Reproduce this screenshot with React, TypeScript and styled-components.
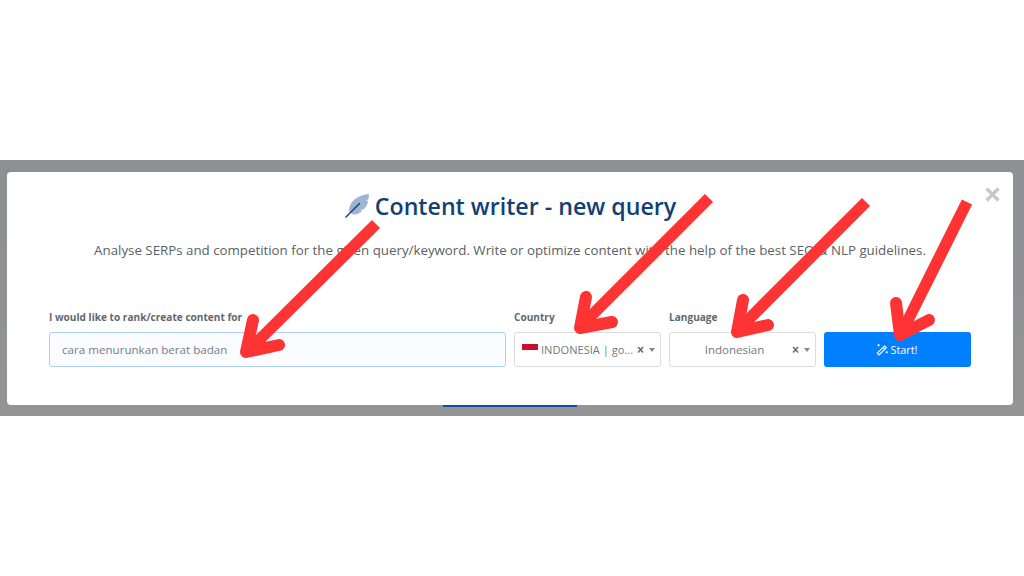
import React from "react";
import styled, { createGlobalStyle } from "styled-components";

const Global = createGlobalStyle`
  html, body { margin: 0; padding: 0; background: #fff; }
  body { font-family: "Open Sans", sans-serif; overflow: hidden; }
`;

const Page = styled.div`
  position: relative;
  width: 1024px;
  height: 576px;
  padding-top: 160px;
  box-sizing: border-box;
  background: #fff;
  overflow: hidden;
`;

const Band = styled.div`
  height: 256px;
  box-sizing: border-box;
  padding: 12px 11px 0 7px;
  background: linear-gradient(#8f9093 0, #8f9093 60px, #949494 100%);
`;

const Modal = styled.div`
  position: relative;
  height: 233px;
  box-sizing: border-box;
  background: #fff;
  border-radius: 4px;
  padding: 19px 42px 0 42px;
  display: flex;
  flex-direction: column;
  align-items: center;
`;

const BehindBar = styled.div`
  width: 134px;
  height: 2px;
  margin: 0 0 0 436px;
  background: #0a4ea8;
`;

const Close = styled.div`
  position: absolute;
  top: 15px;
  right: 13px;
  color: #c8c8c8;
  line-height: 0;
`;

const TitleRow = styled.div`
  display: flex;
  align-items: center;
  gap: 5px;
  height: 30px;
`;

const Title = styled.h2`
  margin: 0;
  font-family: "Open Sans", sans-serif;
  font-size: 23.2px;
  font-weight: 600;
  color: #123f74;
  white-space: nowrap;
`;

const Lead = styled.p`
  margin: 20px 0 0;
  font-family: "Open Sans", sans-serif;
  font-size: 13.3px;
  line-height: 18px;
  color: #5a5f66;
  white-space: nowrap;
`;

const FormRow = styled.div`
  display: flex;
  align-items: flex-end;
  gap: 8px;
  align-self: stretch;
  margin-top: 51px;
`;

const Field = styled.div<{ $w: number }>`
  width: ${(p) => p.$w}px;
  flex: none;
  display: flex;
  flex-direction: column;
  gap: 8px;
`;

const Label = styled.label`
  font-family: "Open Sans", sans-serif;
  font-size: 10.1px;
  font-weight: 700;
  line-height: 14px;
  color: #63676d;
  white-space: nowrap;
`;

const Query = styled.div`
  height: 35px;
  box-sizing: border-box;
  border: 1.5px solid #acd0f7;
  border-radius: 3px;
  background: #fbfcff;
  padding-left: 12px;
  display: flex;
  align-items: center;
  font-family: "Open Sans", sans-serif;
  font-size: 11.6px;
  color: #777c83;
`;

const Select = styled.div`
  height: 35px;
  box-sizing: border-box;
  border: 1.5px solid #dcdcdc;
  border-radius: 3px;
  background: #fff;
  padding: 0 4px 0 7px;
  display: flex;
  align-items: center;
  font-family: "Open Sans", sans-serif;
  color: #74787e;
`;

const Flag = styled.span`
  width: 16px;
  height: 6px;
  margin-right: 3px;
  margin-top: -5px;
  background: #c8102e;
  flex: none;
`;

const Value = styled.span<{ $center?: boolean; $size: number }>`
  flex: 1;
  min-width: 0;
  white-space: nowrap;
  font-size: ${(p) => p.$size}px;
  text-align: ${(p) => (p.$center ? "center" : "left")};
`;

const Clear = styled.span`
  font-family: "Liberation Sans", sans-serif;
  font-size: 12px;
  font-weight: 700;
  color: #666;
  margin-right: 5px;
`;

const Caret = styled.span`
  width: 0;
  height: 0;
  margin-right: 1px;
  border-left: 3.5px solid transparent;
  border-right: 3.5px solid transparent;
  border-top: 4px solid #888;
`;

const Start = styled.button`
  flex: none;
  width: 147px;
  height: 35px;
  border: 0;
  border-radius: 3px;
  background: #007fff;
  color: #fff;
  font-family: "Open Sans", sans-serif;
  font-size: 10.8px;
  font-weight: 500;
  display: flex;
  align-items: center;
  justify-content: center;
  gap: 2px;
  padding: 0 2px 0 0;
`;

const Arrows = styled.svg`
  position: absolute;
  left: 0;
  top: 0;
  pointer-events: none;
`;

const Feather = () => (
  <svg width="26" height="26" viewBox="0 0 26 26" fill="none">
    <path d="M25 1C14 2 5 8 5 18L9 21.5C13 22 16 20 18 18L16.5 16.5L19.5 16.5C22 14 24 11 24 8L22 7.5L24.5 6Z" fill="#9db5d0" />
    <path d="M2 24L15.5 10.5" stroke="#164a83" strokeWidth="1.6" strokeLinecap="round" />
  </svg>
);

const Wand = () => (
  <svg width="13" height="13" viewBox="0 0 13 13" fill="none" stroke="#fff" strokeWidth="1.1" strokeLinejoin="round">
    <path d="M1.2 10.2L8.6 2.8L10.4 4.6L3 12Z" />
    <path d="M7 4.4L8.8 6.2" />
    <path d="M2.6 1V3.4M1.4 2.2H3.8M10.8 8V10.4M9.6 9.2H12" strokeWidth="0.9" />
  </svg>
);

const arrows = [
  { line: "M376 224L250 349", head: "M253 320L246 352L279 345" },
  { line: "M709 198L583 324", head: "M586 297L580 328L612 322" },
  { line: "M866 202L740 328", head: "M743 300L737 332L768 325" },
  { line: "M967 202L903 330", head: "M896 303L900 335L929 320" },
];

export default function App() {
  return (
    <Page>
      <Global />
      <Band>
        <Modal>
          <Close>
            <svg width="15" height="15" viewBox="0 0 15 15" fill="none" stroke="currentColor" strokeWidth="3.2">
              <path d="M1.5 1.5L13.5 13.5M13.5 1.5L1.5 13.5" />
            </svg>
          </Close>
          <TitleRow>
            <Feather />
            <Title>Content writer - new query</Title>
          </TitleRow>
          <Lead>
            Analyse SERPs and competition for the given query/keyword. Write or optimize content with the help of the best SEO &amp; NLP guidelines.
          </Lead>
          <FormRow>
            <Field $w={457}>
              <Label>I would like to rank/create content for</Label>
              <Query>cara menurunkan berat badan</Query>
            </Field>
            <Field $w={147}>
              <Label>Country</Label>
              <Select>
                <Flag />
                <Value $size={11.1}>INDONESIA | go...</Value>
                <Clear>×</Clear>
                <Caret />
              </Select>
            </Field>
            <Field $w={147}>
              <Label>Language</Label>
              <Select>
                <Value $center $size={11.5}>Indonesian</Value>
                <Clear>×</Clear>
                <Caret />
              </Select>
            </Field>
            <Start>
              <Wand />
              Start!
            </Start>
          </FormRow>
        </Modal>
        <BehindBar />
      </Band>
      <Arrows width="1024" height="576" viewBox="0 0 1024 576" fill="none">
        {arrows.map((a) => (
          <g key={a.line} stroke="#fe3333">
            <path d={a.line} strokeWidth="11.5" />
            <path d={a.head} strokeWidth="12" strokeLinecap="round" strokeLinejoin="round" />
          </g>
        ))}
      </Arrows>
    </Page>
  );
}
